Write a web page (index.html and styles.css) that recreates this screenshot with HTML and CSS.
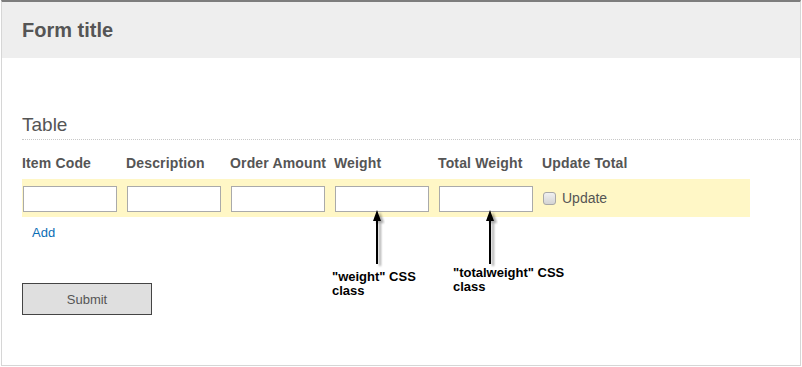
FILE: index.html
```html
<!DOCTYPE html>
<html lang="en">
<head>
  <meta charset="UTF-8">
  <title>Form title</title>
  <link rel="stylesheet" href="styles.css">
</head>
<body>
  <div class="frame">
    <div class="form-header">Form title</div>

    <div class="form-body">
      <div class="section-title">Table</div>

      <div class="grid-head">
        <div>Item Code</div>
        <div>Description</div>
        <div>Order Amount</div>
        <div>Weight</div>
        <div>Total Weight</div>
        <div>Update Total</div>
      </div>

      <div class="grid-row">
        <input type="text" class="itemcode">
        <input type="text" class="description">
        <input type="text" class="amount">
        <input type="text" class="weight">
        <input type="text" class="totalweight">
        <label class="update"><input type="checkbox"> Update</label>
      </div>

      <a class="add-link" href="#">Add</a>

      <button class="submit-btn">Submit</button>
    </div>

    <!-- annotations drawn over the screenshot -->
    <svg class="arrow arrow-weight" width="20" height="60" viewBox="0 0 20 60">
      <defs>
        <filter id="shadow" x="-50%" y="-20%" width="200%" height="140%">
          <feDropShadow dx="3" dy="2" stdDeviation="1.2" flood-color="#000" flood-opacity="0.35"/>
        </filter>
      </defs>
      <g filter="url(#shadow)">
        <rect x="5" y="8" width="2" height="46" fill="#000"/>
        <polygon points="6,0 10,11 2,11" fill="#000"/>
      </g>
    </svg>
    <svg class="arrow arrow-total" width="20" height="60" viewBox="0 0 20 60">
      <g filter="url(#shadow)">
        <rect x="5" y="8" width="2" height="46" fill="#000"/>
        <polygon points="6,0 10,11 2,11" fill="#000"/>
      </g>
    </svg>

    <div class="note note-weight">"weight" CSS<br>class</div>
    <div class="note note-total">"totalweight" CSS<br>class</div>
  </div>
</body>
</html>
```

FILE: styles.css
```css
body {
  margin: 0;
  background: #fff;
  font-family: "Liberation Sans", Arial, sans-serif;
  color: #555;
}

.frame {
  position: relative;
  margin-left: 1px;
  width: 798px;
  height: 363px;
  border: 1px solid #d6d6d6;
  border-top: 2px solid #7d7d7d;
}

.form-header {
  height: 56px;
  line-height: 56px;
  padding-left: 20px;
  background: #eeeeee;
  font-size: 20px;
  font-weight: bold;
  color: #555;
}

.form-body {
  padding-left: 20px;
}

.section-title {
  margin-top: 56px;
  padding-bottom: 3px;
  font-size: 19px;
  line-height: 22px;
  color: #555;
  border-bottom: 1px dotted #c8c8c8;
}

.grid-head {
  display: grid;
  grid-template-columns: repeat(6, 104px);
  margin-top: 15px;
  font-size: 14px;
  line-height: 17px;
  font-weight: bold;
  letter-spacing: 0.15px;
  color: #555;
  white-space: nowrap;
}

.grid-row {
  display: grid;
  grid-template-columns: repeat(7, 104px);
  align-items: center;
  width: 727px;
  height: 38px;
  margin-top: 7px;
  padding-left: 1px;
  background: #fff7c6;
}

.grid-row input[type="text"] {
  box-sizing: border-box;
  width: 94px;
  height: 26px;
  margin: 1px 0 0 0;
  border: 1px solid #aaaaaa;
  background: #fff;
  padding: 2px 4px;
}

.update {
  display: flex;
  align-items: center;
  gap: 6px;
  font-size: 14px;
  color: #555;
}

.update input {
  appearance: none;
  box-sizing: border-box;
  width: 13px;
  height: 13px;
  margin: 0;
  border: 1px solid #a8a8a8;
  border-radius: 3px;
  background: linear-gradient(#f0f0f0, #d4d4d4);
}

.add-link {
  display: block;
  width: fit-content;
  margin-top: 8px;
  margin-left: 10px;
  font-size: 13px;
  line-height: 15px;
  color: #0a6db5;
  text-decoration: none;
}

.submit-btn {
  display: block;
  box-sizing: border-box;
  width: 130px;
  height: 32px;
  margin-top: 43px;
  padding: 0;
  border: 1px solid #444;
  background: #dfdfdf;
  font-family: "Liberation Sans", Arial, sans-serif;
  font-size: 13px;
  color: #555;
}

.arrow {
  position: absolute;
}

.arrow-weight {
  left: 369px;
  top: 208px;
}

.arrow-total {
  left: 482px;
  top: 208px;
}

.note {
  position: absolute;
  font-size: 13px;
  line-height: 14px;
  font-weight: bold;
  color: #000;
  white-space: nowrap;
}

.note-weight {
  left: 330px;
  top: 268px;
}

.note-total {
  left: 451px;
  top: 264px;
}
```
